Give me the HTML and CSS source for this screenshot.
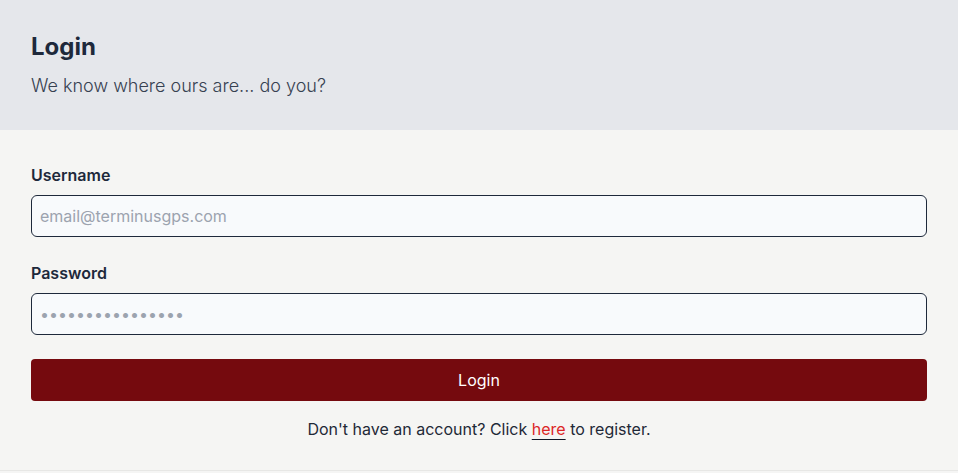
FILE: index.html
```html
<!DOCTYPE html>
<html lang="en">
<head>
<meta charset="utf-8">
<title>Login</title>
<link rel="stylesheet" href="styles.css">
</head>
<body>
<div class="card">
  <header class="card-header">
    <h1 class="title">Login</h1>
    <p class="subtitle">We know where ours are... do you?</p>
  </header>
  <form class="card-body">
    <div class="field">
      <label class="label" for="username">Username</label>
      <input class="input" id="username" type="text" placeholder="email@terminusgps.com">
    </div>
    <div class="field">
      <label class="label" for="password">Password</label>
      <input class="input" id="password" type="password" placeholder="••••••••••••••••">
    </div>
    <button class="btn" type="button">Login</button>
    <p class="register">Don't have an account? Click <a class="link" href="#">here</a> to register.</p>
  </form>
</div>
</body>
</html>
```
FILE: styles.css
```css
* { box-sizing: border-box; }
html, body { margin: 0; padding: 0; }
body {
  font-family: Inter, "Noto Sans", sans-serif;
  background: #f5f5f4;
  color: #1f2937;
}
.card {
  background: #f5f5f3;
  box-shadow: 0 0 3px rgba(0,0,0,0.15);
  border-bottom: 1px solid #e7e7e5;
}
.card-header {
  background: #e5e7eb;
  padding: 31px 31px 30px;
  display: flex;
  flex-direction: column;
  gap: 9px;
}
.title {
  margin: 0;
  font-size: 24px;
  line-height: 32px;
  font-weight: 700;
  color: #1e293b;
}
.subtitle {
  margin: 0;
  font-size: 18px;
  line-height: 28px;
  font-weight: 300;
  color: #374151;
}
.card-body {
  padding: 33px 31px 29px;
  display: flex;
  flex-direction: column;
  gap: 24px;
  margin: 0;
}
.field {
  display: flex;
  flex-direction: column;
  gap: 8px;
}
.label {
  font-size: 16px;
  line-height: 24px;
  font-weight: 600;
  color: #1e293b;
}
.input {
  height: 42px;
  width: 100%;
  border: 1px solid #1e293b;
  border-radius: 6px;
  background: #f8fafc;
  padding: 0 8px;
  font-family: inherit;
  font-size: 16px;
  color: #1f2937;
  outline: none;
}
.input::placeholder { color: #9ca3af; }
.btn {
  height: 42px;
  width: 100%;
  border: none;
  border-radius: 4px;
  background: #750a0e;
  color: #ffffff;
  font-family: inherit;
  font-size: 16px;
  cursor: pointer;
}
.register {
  margin: -8px 0 0;
  text-align: center;
  font-size: 16px;
  line-height: 24px;
  color: #1f2937;
}
.link {
  color: #dc2626;
  text-decoration: underline;
  text-decoration-color: #111827;
  text-underline-offset: 4px;
}
```
